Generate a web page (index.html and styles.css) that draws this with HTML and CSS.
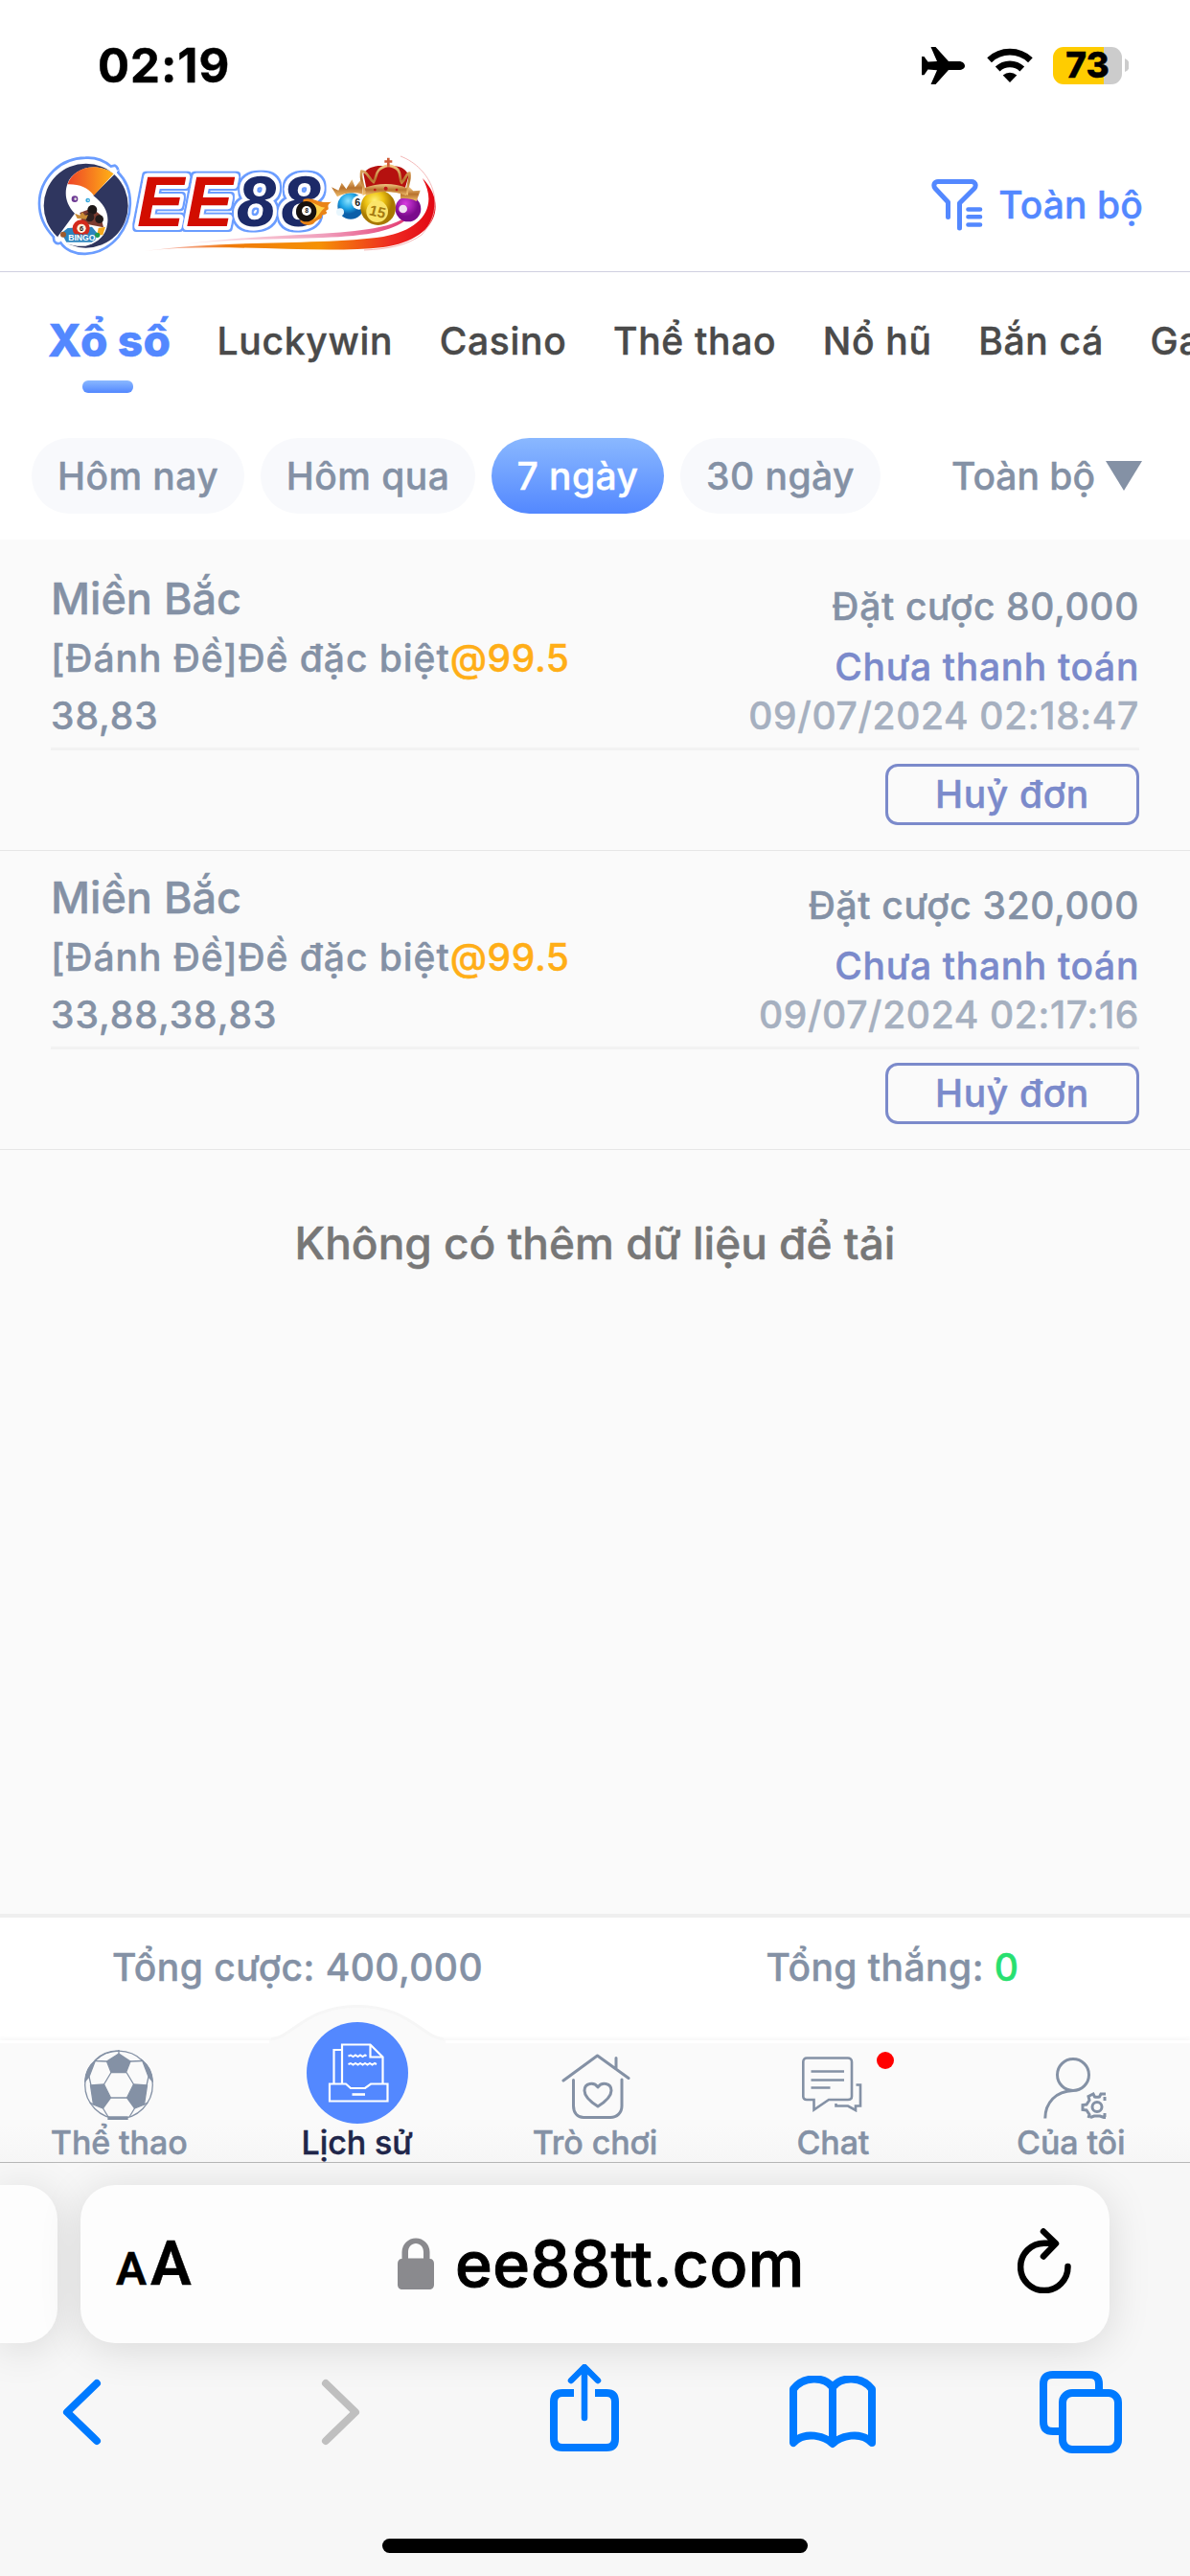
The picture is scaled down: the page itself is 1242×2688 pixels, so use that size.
FILE: index.html
```html
<!DOCTYPE html>
<html lang="vi">
<head>
<meta charset="utf-8">
<title>EE88</title>
<link rel="stylesheet" href="styles.css">
</head>
<body>
<div class="status">
  <span class="time">02:19</span>
  <div class="status-icons">
    <svg class="plane" viewBox="0 0 45 39"><path d="M45 19.700c0 2.500-2.600 4.300-6 4.300H28L14.500 39H9.500L16 24.300 6.500 23.600 2.500 29.300H0V10h2.500l4 5.500L16 15 9.500 0h5L28 15h11c3.400 0 6 2.200 6 4.700z"/></svg>
    <svg class="wifi" viewBox="0 0 48 36"><g fill="none" stroke="#000" stroke-width="6.800"><path d="M2.600 12.700a31 31 0 0 1 42.800 0"/><path d="M11.200 22a18.500 18.500 0 0 1 25.600 0"/></g><path d="M24 36l-7.300-7.600a11 11 0 0 1 14.600 0z"/></svg>
    <div class="battery"><span>73</span></div>
    <svg class="nub" viewBox="0 0 4 14"><path d="M0 0a7.500 7.500 0 0 1 0 14z" fill="#ccc"/></svg>
  </div>
</div>

<header class="header">
  <svg class="logo" viewBox="36 158 430 112">
    <defs>
      <linearGradient id="orange" x1="0" x2="1"><stop offset="0" stop-color="#ee4427"/><stop offset="1" stop-color="#ffb316"/></linearGradient>
      <linearGradient id="trail" x1="0" x2="1"><stop offset="0" stop-color="#e9453a" stop-opacity=".2"/><stop offset=".3" stop-color="#f07a08"/><stop offset=".6" stop-color="#f59205"/><stop offset=".85" stop-color="#ee2a22"/><stop offset="1" stop-color="#e20613"/></linearGradient>
      <linearGradient id="pink" x1="0" x2="1"><stop offset="0" stop-color="#f4a0b0" stop-opacity=".2"/><stop offset=".6" stop-color="#f0a0bd"/><stop offset="1" stop-color="#e2306a"/></linearGradient>
      <radialGradient id="gold" cx=".4" cy=".3"><stop offset="0" stop-color="#fff27a"/><stop offset=".5" stop-color="#eec414"/><stop offset="1" stop-color="#a87800"/></radialGradient>
      <radialGradient id="sky" cx=".4" cy=".3"><stop offset="0" stop-color="#8be2ff"/><stop offset=".6" stop-color="#1fa5e6"/><stop offset="1" stop-color="#0b5fa8"/></radialGradient>
      <radialGradient id="plum" cx=".4" cy=".3"><stop offset="0" stop-color="#d83be0"/><stop offset="1" stop-color="#7a0a8c"/></radialGradient>
      <linearGradient id="metal" x1="0" x2="0" y1="0" y2="1"><stop offset="0" stop-color="#f3c984"/><stop offset=".5" stop-color="#b8722c"/><stop offset="1" stop-color="#f0bd6c"/></linearGradient>
      <filter id="rim" x="-10%" y="-20%" width="120%" height="140%"><feMorphology in="SourceAlpha" operator="dilate" radius="2" result="fat"/><feFlood flood-color="#6b9dff"/><feComposite in2="fat" operator="in"/><feMerge><feMergeNode/><feMergeNode in="SourceGraphic"/></feMerge></filter>
    </defs>
    <path d="M150 262C230 252 330 266 400 258C455 250 468 214 441 186C458 216 440 240 400 247C340 256 240 250 150 262z" fill="url(#trail)"/>
    <path d="M190 255C270 246 340 252 390 243C425 236 438 220 435 205C432 228 412 235 385 239C330 247 270 244 190 255z" fill="url(#pink)"/>
    <path d="M418 163C450 175 468 215 440 245C425 256 405 260 380 261" fill="none" stroke="#f0a7a7" stroke-width=".8"/>
    <g transform="translate(36 158) scale(.3333)">
      <path d="M160 20C190 18 220 30 240 47L252 44C258 46 263 56 262 66C316 120 308 210 262 268C200 340 110 330 82 286C70 292 58 284 60 268C0 205 0 120 60 60C86 34 120 21 160 20z" fill="#fff" stroke="#6b9dff" stroke-width="8"/>
      <circle cx="161" cy="170" r="132" fill="#2f365f"/>
      <path d="M266 56L184 138C220 165 234 195 228 228C224 265 195 288 160 296C120 300 80 285 72 268L126 194C98 165 92 130 104 100C118 60 180 30 244 66z" fill="#fff"/>
      <path d="M104 103C116 62 180 24 248 70L186 138C165 112 140 102 104 103z" fill="url(#orange)"/>
      <circle cx="126" cy="149" r="10" fill="#6e3a94"/><circle cx="128" cy="149" r="4" fill="#ddd"/>
      <circle cx="167" cy="153" r="7" fill="#35a6dc"/><circle cx="168" cy="153" r="2.500" fill="#fff"/>
      <path d="M142 192L180 178L206 198L216 238L150 225z" fill="#7c3c30"/>
      <circle cx="181" cy="183" r="15" fill="#1d1717"/><circle cx="203" cy="212" r="13" fill="#211b1b"/><circle cx="173" cy="206" r="14" fill="#2e2020"/>
      <path d="M200 240L222 236L214 262H196z" fill="#f5a81c"/>
      <path d="M84 256L104 240L180 236L200 260L180 284H100z" fill="#2b84be"/>
      <circle cx="146" cy="241" r="27" fill="#d32a1c"/><circle cx="147" cy="241" r="14" fill="#fff1dc"/>
      <path d="M134 210L126 194L142 200L150 190L158 200L168 198L162 212z" fill="#c98b36"/>
      <circle cx="90" cy="260" r="9" fill="#9c5a2c"/><circle cx="197" cy="262" r="8" fill="#1d9b52"/>
      <text class="logo-six" x="147" y="249" text-anchor="middle">6</text>
      <text class="logo-bingo" x="148" y="280" text-anchor="middle">BINGO</text>
    </g>
    <g filter="url(#rim)">
      <text class="logo-name red" x="143 194" y="236">EE</text>
      <text class="logo-name navy" x="247 293.500" y="236">88</text>
    </g>
    <g transform="translate(290 158) scale(.3333)">
      <path d="M80 150C110 140 125 165 168 158C145 172 170 178 150 186C160 196 145 198 138 200C142 214 122 210 112 226C100 234 80 232 70 220z" fill="#e98417"/>
      <path d="M105 160C125 166 130 175 148 176C130 188 130 205 108 214z" fill="#ffd24a"/>
      <circle cx="89" cy="188" r="32" fill="#16110f"/><circle cx="90" cy="186" r="15" fill="#fff"/>
      <text class="logo-eight" x="90" y="193" text-anchor="middle">8</text>
      <circle cx="228" cy="171" r="41" fill="url(#sky)"/><circle cx="254" cy="160" r="22" fill="#fff"/><circle cx="195" cy="190" r="12" fill="#e8f6fd"/>
      <text class="logo-ball" x="250" y="171" text-anchor="middle">6</text>
      <path d="M186 142L168 112L190 122L200 98L214 118L232 88L242 112L262 86L266 134C235 126 210 130 186 142z" fill="url(#metal)"/>
      <circle cx="408" cy="180" r="40" fill="url(#plum)"/><circle cx="392" cy="180" r="13" fill="#f0dff2"/>
      <path d="M384 118L402 126L412 112L424 124L446 122L434 156C418 148 400 146 384 148z" fill="url(#metal)"/>
      <circle cx="314" cy="176" r="55" fill="url(#gold)"/><circle cx="311" cy="188" r="34" fill="#fbe46a"/>
      <text class="logo-fifteen" transform="translate(308 204) rotate(14)" text-anchor="middle">15</text>
      <path d="M268 70C280 46 320 40 346 48C375 40 402 52 410 76L398 116C360 104 310 104 278 120z" fill="#b5110f"/>
      <path d="M262 62C280 60 284 86 300 96C312 80 300 54 346 44C396 52 376 84 388 98C400 86 404 66 412 68C416 90 404 108 404 132C360 118 312 118 270 132C272 108 256 90 262 62z" fill="none" stroke="url(#metal)" stroke-width="8"/>
      <path d="M272 114C314 98 362 98 404 114L402 138C362 122 314 122 276 138z" fill="url(#metal)"/>
      <path d="M342 20h8v8h8v7h-8v12h-8V35h-8v-7h8z" fill="#cf5a35"/>
      <circle cx="338" cy="116" r="6" fill="#c01818"/><circle cx="304" cy="120" r="4" fill="#c01818"/><circle cx="372" cy="120" r="4" fill="#c01818"/>
    </g>
  </svg>
  <div class="filter">
    <svg class="funnel" viewBox="0 0 54 54" fill="none" stroke="#5388ff" stroke-linecap="round"><path stroke-width="5" stroke-linejoin="round" d="M17.500 39.500V24L4 9.500C1.500 6 3.500 2.500 7 2.500h35c3.500 0 5.500 3.500 3 7L29.500 25v26"/><path stroke-width="4.600" d="M38.500 31.500h12.500M38.500 39.300h12.500M38.500 47.500h12.500"/></svg>
    <span>Toàn bộ</span>
  </div>
</header>

<nav class="games">
  <a class="active">Xổ số</a><a>Luckywin</a><a>Casino</a><a>Thể thao</a><a>Nổ hũ</a><a>Bắn cá</a><a class="rest">Game</a>
</nav>

<div class="ranges">
  <button class="chip c1">Hôm nay</button>
  <button class="chip c2">Hôm qua</button>
  <button class="chip c3 on">7 ngày</button>
  <button class="chip c4">30 ngày</button>
  <div class="dropdown"><span>Toàn bộ</span><svg viewBox="0 0 38 31"><path d="M0 0h38L19 31z" fill="#8491a5"/></svg></div>
</div>

<main class="list">
  <article class="bet">
    <div class="bet-body">
      <div class="bet-left">
        <div class="region">Miền Bắc</div>
        <div class="kind"><span>[Đánh Đề]Đề đặc biệt</span><span class="odds">@99.5</span></div>
        <div class="numbers">38,83</div>
      </div>
      <div class="bet-right">
        <div class="stake">Đặt cược 80,000</div>
        <div class="state">Chưa thanh toán</div>
        <div class="date">09/07/2024 02:18:47</div>
      </div>
    </div>
    <button class="cancel">Huỷ đơn</button>
  </article>
  <article class="bet">
    <div class="bet-body">
      <div class="bet-left">
        <div class="region">Miền Bắc</div>
        <div class="kind"><span>[Đánh Đề]Đề đặc biệt</span><span class="odds">@99.5</span></div>
        <div class="numbers">33,88,38,83</div>
      </div>
      <div class="bet-right">
        <div class="stake">Đặt cược 320,000</div>
        <div class="state">Chưa thanh toán</div>
        <div class="date">09/07/2024 02:17:16</div>
      </div>
    </div>
    <button class="cancel">Huỷ đơn</button>
  </article>
  <p class="end">Không có thêm dữ liệu để tải</p>
</main>

<section class="totals">
  <div>Tổng cược: 400,000</div>
  <div>Tổng thắng: <span class="win">0</span></div>
</section>

<nav class="tabbar">
  <svg class="bump" viewBox="0 0 184 42"><path d="M0 37C22 36 36 3 92 3S162 36 184 37V42H0z" fill="#fafafa"/><path d="M2 36C24 34 38 1.500 92 1.500S160 34 182 36" fill="none" stroke="#f6f6f6" stroke-width="3"/></svg>
  <a class="tab">
    <svg class="ball" viewBox="0 0 72 73" fill="none" stroke="#8491a5" stroke-width="1.300"><circle cx="36" cy="36.500" r="35.300"/><path fill="#8491a5" d="M36 4l12 8-4.500 11.500H28L23.500 12zM6.500 37l14-1 7 14-8 11-10-4zM65.500 37l-14-1-7 14 8 11 10-4zM25 70h20v2.500H25zM.7 33C1 24 4 17 11.500 11L5 28zM71.300 33C71 24 68 17 60.500 11L67 28z"/><path d="M28 23.500L20.500 36M44 23.500L51.500 36M27.500 50h17M23.500 12l-12-.5M48 12l12-.5M36 4V0M5 28l2 9M67 28l-2 9M19.500 61l5.500 9M52.500 61L47 70M6 55l3.500 2M66 55l-3.500 2M11 11C18 3 27 1 36 .8"/></svg>
    <span>Thể thao</span>
  </a>
  <a class="tab current">
    <svg class="history" viewBox="0 0 106 106"><circle cx="53" cy="53" r="53" fill="#5388ff"/><g fill="none" stroke="#fff" stroke-width="2.200"><path d="M37 64V23.500h29.500L79.500 36.500V64M66.500 23.500v13h13M37 29h-8.500V64"/><path d="M24 64.500h17l5 4.500h15l6-4.500h17.500V82.500H24z"/><path d="M47.500 75.500h13.500" stroke-width="2.600"/><path stroke-width="2" d="M43.500 35.500l2.500-1 2.500 1.500 2.500-1.500 2.500 1.500 2.500-1.500 2.500 1.500 2.500-1.500 1.500 1M43.500 44l2.500-1 2.500 1.500 2.500-1.500 2.500 1.500 2.500-1.500 2.500 1.500 2.500-1.500 2.500 1.500 2.500-1.500 2.500 1.500 2.500-1.500 2 1"/></g></svg>
    <span>Lịch sử</span>
  </a>
  <a class="tab">
    <svg class="house" viewBox="0 0 72 69" fill="none" stroke="#8491a5" stroke-width="3" stroke-linecap="round" stroke-linejoin="round"><path d="M2 28L37.500 2 70 25.500M57 4.500v11.500M12.500 27.500v27c0 7 4 12 10.500 12h28c7 0 12-5 12-12V27"/><path d="M38 55c-8-5-14-10-14-16.500 0-8 10-9.500 14-3.500 4-6 14-4.500 14 3.500C52 45 46 50 38 55z"/></svg>
    <span>Trò chơi</span>
  </a>
  <a class="tab">
    <svg class="bubbles" viewBox="0 0 64 58" fill="none" stroke="#8491a5" stroke-width="2.600"><path d="M5 1.500h43c2 0 4 1.500 4 4v36c0 2-1.500 3.500-4 3.500H28L12.500 55.500V45H5c-2.500 0-3.700-1.500-3.700-3.500v-36c0-2.500 1.500-4 3.700-4z"/><path d="M9.500 15.500h34.500M9.500 24.500h34.500M9.500 32.500h20M56.500 29.500h4.500v22h-5v4.500l-8-4.500H35.500v-2.500"/></svg>
    <i class="dot"></i>
    <span>Chat</span>
  </a>
  <a class="tab">
    <svg class="user" viewBox="0 0 66 64" fill="none" stroke="#8491a5" stroke-width="3"><circle cx="31" cy="18" r="16.500"/><path d="M1.800 63.500C2 47 13 35 31 34.500"/><circle cx="56" cy="51.500" r="5"/><path d="M65 38h-5l-1.500 3c-2 .5-3.500.5-5 0L52 38l-5 2.500 1 4-3 4.500-4 .5v5l4 .5 3 4.500-1 3.500M49 62.500l4-1.500h6l4 1.500h2M64 41v4M64 58v4"/></svg>
    <span>Của tôi</span>
  </a>
</nav>

<footer class="safari">
  <div class="cards">
    <div class="card-prev"></div>
    <div class="address">
      <div class="aa"><span class="aa-s">A</span><span class="aa-l">A</span></div>
      <div class="url">
        <svg viewBox="0 0 38 54"><path d="M4.500 22V15a14.500 14.500 0 0 1 29 0v7c3 0 4.500 2 4.500 5v22c0 3-2 5-5 5H5c-3 0-5-2-5-5V27c0-3 1.500-5 4.500-5zM11 21.500h16V15c0-5.500-3.500-9-8-9s-8 3.500-8 9z" fill="#8a8a8e"/></svg>
        <span>ee88tt.com</span>
      </div>
      <svg class="reload" viewBox="0 0 56 68" fill="none" stroke="#000" stroke-width="6.500" stroke-linecap="round" stroke-linejoin="round"><path d="M52.500 40A24.700 24.700 0 1 1 28 15.700h11M27 3.500L40 16 27 29.500"/></svg>
    </div>
  </div>
  <div class="tools">
    <svg class="back" viewBox="0 0 41 70"><path d="M36 5L5 35l31 30"/></svg>
    <svg class="forward" viewBox="0 0 41 70"><path d="M5 5l31 30L5 65"/></svg>
    <svg class="share" viewBox="0 0 72 92"><path d="M25 30H13C7 30 4 33 4 39v39c0 6 3 9 9 9h46c6 0 9-3 9-9V39c0-6-3-9-9-9H47" stroke-linecap="butt"/><path d="M36 56V4M22 17L36 3l14 14" stroke-width="6.500"/></svg>
    <svg class="book" viewBox="0 0 90 76"><path d="M45 71C37 63 16 57 4 70V14C14 .500 36 0 45 12 54 0 76 .500 86 14V70C74 57 53 63 45 71zM45 12v58"/></svg>
    <svg class="windows" viewBox="0 0 86 86"><path d="M20 63h-6C7 63 4 60 4 53V14C4 7 7 4 14 4h38c7 0 10 3 10 10v5" stroke-linecap="butt"/><rect x="24" y="23" width="58" height="59" rx="10"/></svg>
  </div>
  <div class="home"></div>
</footer>
</body>
</html>
```
FILE: styles.css
```css
* { box-sizing: border-box; }

body {
  margin: 0;
  width: 1242px;
  height: 2688px;
  display: flex;
  flex-direction: column;
  overflow: hidden;
  background: #fff;
  color: #8491a5;
  font-family: Inter, "Liberation Sans", sans-serif;
  font-weight: 500;
  font-size: 39px;
  letter-spacing: .45px;
  -webkit-text-stroke: .45px currentColor;
}

button {
  font: inherit;
  color: inherit;
  border: 0;
  padding: 0;
  letter-spacing: inherit;
}

svg { display: block; flex: none; }

/* status bar */
.status {
  height: 144px;
  padding: 0 64px 8px 102px;
  display: flex;
  align-items: center;
  justify-content: space-between;
  color: #000;
}
.time { font-size: 49px; font-weight: 700; letter-spacing: 1px; }
.status-icons { display: flex; align-items: center; }
.plane { width: 45px; height: 39px; margin-right: 23px; }
.wifi { width: 48px; height: 36px; margin-right: 21px; }
.battery {
  width: 72px;
  height: 39px;
  border-radius: 11px;
  background: linear-gradient(90deg, #fc0 53px, #ccc 53px);
  font-size: 37px;
  font-weight: 800;
  line-height: 38px;
  letter-spacing: 0;
  text-align: center;
}
.nub { width: 4px; height: 14px; margin-left: 3px; }

/* header */
.header {
  height: 140px;
  padding: 0 49px 0 36px;
  display: flex;
  align-items: center;
  justify-content: space-between;
  border-bottom: 1px solid #d0d0e0;
}
.logo {
  width: 430px;
  height: 112px;
  letter-spacing: 0;
  -webkit-text-stroke: 0;
}
.logo-name {
  font: italic bold 74px "Liberation Sans", sans-serif;
  stroke: #fff;
  stroke-width: 8px;
  stroke-linejoin: round;
  paint-order: stroke;
}
.red { fill: #d20a00; }
.navy { fill: #1d2b68; }
.logo-six { font: bold 22px "Liberation Sans", sans-serif; fill: #2a1010; }
.logo-bingo {
  font: bold 26px "Liberation Sans", sans-serif;
  fill: #fff;
  stroke: #2b84be;
  stroke-width: 4px;
  paint-order: stroke;
}
.logo-eight { font: bold 20px "Liberation Sans", sans-serif; fill: #111; }
.logo-ball { font: bold 32px "Liberation Sans", sans-serif; fill: #222; }
.logo-fifteen { font: bold 46px "Liberation Sans", sans-serif; fill: #a67a10; }
.filter {
  display: flex;
  align-items: center;
  gap: 16px;
  color: #5388ff;
  letter-spacing: .1px;
}
.funnel { width: 54px; height: 54px; }

/* game categories */
.games {
  height: 142px;
  padding-left: 50px;
  display: flex;
  align-items: center;
  gap: 48.5px;
  overflow: hidden;
  color: #4a4a4a;
  white-space: nowrap;
  letter-spacing: .7px;
}
.games a { flex: none; }
.games .rest { flex: 1; min-width: 0; overflow: hidden; }
.games .active {
  position: relative;
  color: #5388ff;
  font-size: 46px;
  font-weight: 800;
  letter-spacing: .2px;
}
.games .active::after {
  content: "";
  position: absolute;
  left: 36px;
  bottom: -27px;
  width: 53px;
  height: 13px;
  border-radius: 6px;
  background: linear-gradient(#8ab8ff, #5388ff);
}

/* date ranges */
.ranges {
  height: 137px;
  padding: 31px 50px 27px 33px;
  display: flex;
  gap: 17px;
}
.chip {
  border-radius: 40px;
  background: #f8f9fc;
}
.c1 { width: 222px; }
.c2 { width: 224px; }
.c3 { width: 180px; }
.c4 { width: 209px; }
.chip.on {
  color: #fff;
  background: linear-gradient(#8ab8ff, #5388ff);
}
.dropdown {
  margin-left: auto;
  display: flex;
  align-items: center;
  gap: 11px;
  letter-spacing: 0;
}
.dropdown svg { width: 38px; height: 31px; }

/* bets */
.list {
  flex: 1;
  padding-top: 13px;
  background: #fafafa;
}
.bet {
  height: 312px;
  padding: 0 53px;
  display: flex;
  flex-direction: column;
  border-bottom: 1px solid #e6e6e6;
  letter-spacing: .65px;
}
.bet-body {
  height: 207px;
  display: flex;
  justify-content: space-between;
  border-bottom: 3px solid #f2f2f2;
}
.bet-left { padding-top: 17px; letter-spacing: .95px; }
.region { font-size: 45px; line-height: 63px; letter-spacing: 0; }
.kind { line-height: 62px; }
.odds { color: #ffae17; letter-spacing: .6px; }
.numbers { line-height: 58px; }
.bet-right { padding-top: 26px; text-align: right; }
.stake { line-height: 62px; }
.state { line-height: 64px; color: #7b8acb; }
.date { line-height: 38px; color: #a6b0c0; }
.cancel {
  align-self: flex-end;
  width: 265px;
  height: 64px;
  margin-top: 14px;
  border: 3px solid #7b8acb;
  border-radius: 13px;
  background: none;
  color: #7b8acb;
  line-height: 56px;
}
.end {
  margin: 66px 0 0;
  font-size: 46px;
  line-height: 62px;
  letter-spacing: 0;
  text-align: center;
  color: #777;
}

/* totals */
.totals {
  height: 132px;
  padding-bottom: 26px;
  display: grid;
  grid-template-columns: 1fr 1fr;
  align-items: center;
  text-align: center;
  border-top: 4px solid #efefef;
}
.win { color: #28e070; }

/* site tab bar */
.tabbar {
  position: relative;
  height: 127px;
  display: grid;
  grid-template-columns: repeat(5, 1fr);
  grid-template-rows: 127px;
  background: linear-gradient(#fafafa 70%, #f6f6f6);
  box-shadow: 0 -2px 5px #0000000a, inset 0 4px 0 -1px #fff;
  font-size: 34px;
  letter-spacing: -.1px;
}
.bump {
  position: absolute;
  left: 281px;
  top: -37px;
  width: 184px;
  height: 42px;
}
.tab {
  position: relative;
  display: flex;
  flex-direction: column;
  align-items: center;
  justify-content: flex-end;
}
.tab span { line-height: 40px; }
.ball { width: 72px; height: 73px; margin-bottom: 4px; }
.history { width: 106px; height: 106px; }
.house { width: 72px; height: 69px; margin-bottom: 4px; margin-left: 3px; }
.bubbles { width: 64px; height: 58px; margin-bottom: 12px; }
.user { width: 66px; height: 64px; margin-bottom: 5px; margin-left: 8px; }
.current { color: #20264a; }
.dot {
  position: absolute;
  left: 170px;
  top: 12px;
  width: 18px;
  height: 18px;
  border-radius: 50%;
  background: #f00;
}

/* browser chrome */
.safari {
  height: 432px;
  display: flex;
  flex-direction: column;
  background: #f7f7f7;
  border-top: 1px solid #b8b8b8;
}
.cards { display: flex; gap: 24px; padding-top: 23px; }
.card-prev,
.address {
  height: 165px;
  background: #fdfdfd;
  box-shadow: 0 6px 44px #00000020;
}
.card-prev { width: 60px; border-radius: 0 36px 36px 0; }
.address {
  width: 1074px;
  padding: 0 40px 0 37px;
  display: flex;
  align-items: center;
  justify-content: space-between;
  border-radius: 36px;
  color: #000;
}
.aa {
  display: flex;
  align-items: baseline;
  gap: 4px;
  font-family: Roboto, sans-serif;
  font-weight: 600;
  letter-spacing: 0;
}
.aa-s { font-size: 48px; }
.aa-l { font-size: 64px; }
.url {
  display: flex;
  align-items: center;
  gap: 22px;
  margin: 0 7px 2px 0;
  font-size: 66px;
  -webkit-text-stroke-width: 1px;
}
.url svg { width: 38px; height: 54px; }
.reload { width: 56px; height: 68px; margin-bottom: 7px; }
.tools {
  height: 92px;
  margin-top: 22px;
  padding-left: 65px;
  display: flex;
  align-items: center;
}
.tools svg {
  fill: none;
  stroke: #007aff;
  stroke-width: 8px;
  stroke-linecap: round;
  stroke-linejoin: round;
}
.back { width: 41px; height: 70px; margin-top: 7px; }
.tools .forward { width: 41px; height: 70px; margin: 7px 198px 0 229px; stroke: #bfbfbf; }
.share { width: 72px; height: 92px; }
.book { width: 90px; height: 76px; margin: 7px 171px 0 178px; }
.windows { width: 86px; height: 86px; margin-top: 7px; }
.home {
  width: 444px;
  height: 15px;
  margin: auto auto 24px;
  border-radius: 8px;
  background: #000;
}
```
